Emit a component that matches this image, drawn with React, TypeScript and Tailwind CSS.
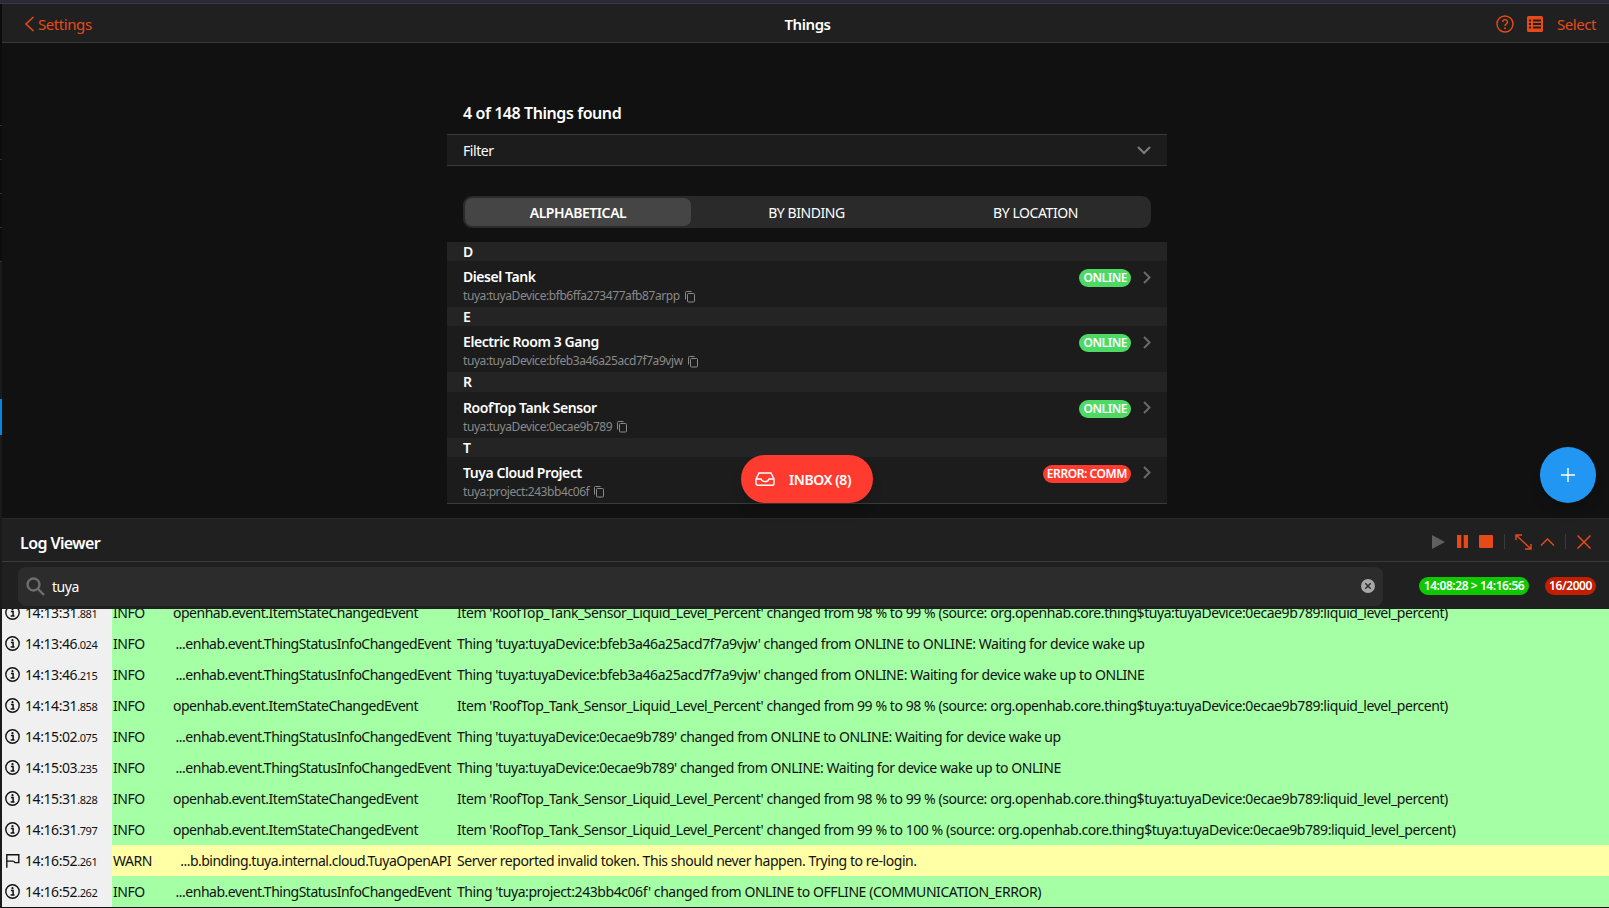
import React from "react";

const OR = "#e64a19";

function Copy() {
  return (
    <svg width="12" height="13" viewBox="0 0 12 13" fill="none" stroke="#8a8a8a" strokeWidth="1" className="ml-[4px] shrink-0">
      <rect x="3.5" y="3.5" width="7" height="8.5" rx="1" />
      <path d="M1.5 9.5V2.5a1 1 0 0 1 1-1h5" />
    </svg>
  );
}

function Info() {
  return (
    <svg width="15" height="15" viewBox="0 0 15 15" fill="none" className="shrink-0">
      <circle cx="7.5" cy="7.5" r="6.7" stroke="#111" strokeWidth="1.4" />
      <circle cx="7.5" cy="4.2" r="1.1" fill="#111" />
      <path d="M5.900 6.600h2.200v4.200M5.600 11h3.900" stroke="#111" strokeWidth="1.5" />
    </svg>
  );
}

function Flag() {
  return (
    <svg width="15" height="15" viewBox="0 0 15 15" fill="none" stroke="#111" strokeWidth="1.4" className="shrink-0">
      <path d="M1.800 14.800V1.800h12v7.800H10c-.6-1-1.200-1.500-2.200-1.500H1.800" />
    </svg>
  );
}

function Chevron() {
  return (
    <svg width="8" height="13" viewBox="0 0 8 13" fill="none" stroke="#6a6a6a" strokeWidth="2">
      <path d="M1 1l5.500 5.500L1 12" />
    </svg>
  );
}

const groups = [
  { l: "D", t: "Diesel Tank", u: "tuya:tuyaDevice:bfb6ffa273477afb87arpp", s: "ONLINE" },
  { l: "E", t: "Electric Room 3 Gang", u: "tuya:tuyaDevice:bfeb3a46a25acd7f7a9vjw", s: "ONLINE" },
  { l: "R", t: "RoofTop Tank Sensor", u: "tuya:tuyaDevice:0ecae9b789", s: "ONLINE" },
  { l: "T", t: "Tuya Cloud Project", u: "tuya:project:243bb4c06f", s: "ERROR: COMM" },
];

const I = "openhab.event.ItemStateChangedEvent";
const T = "...enhab.event.ThingStatusInfoChangedEvent";
const logs: [string, string, string, string, string][] = [
  ["14:13:31", "881", "INFO", I, "Item 'RoofTop_Tank_Sensor_Liquid_Level_Percent' changed from 98 % to 99 % (source: org.openhab.core.thing$tuya:tuyaDevice:0ecae9b789:liquid_level_percent)"],
  ["14:13:46", "024", "INFO", T, "Thing 'tuya:tuyaDevice:bfeb3a46a25acd7f7a9vjw' changed from ONLINE to ONLINE: Waiting for device wake up"],
  ["14:13:46", "215", "INFO", T, "Thing 'tuya:tuyaDevice:bfeb3a46a25acd7f7a9vjw' changed from ONLINE: Waiting for device wake up to ONLINE"],
  ["14:14:31", "858", "INFO", I, "Item 'RoofTop_Tank_Sensor_Liquid_Level_Percent' changed from 99 % to 98 % (source: org.openhab.core.thing$tuya:tuyaDevice:0ecae9b789:liquid_level_percent)"],
  ["14:15:02", "075", "INFO", T, "Thing 'tuya:tuyaDevice:0ecae9b789' changed from ONLINE to ONLINE: Waiting for device wake up"],
  ["14:15:03", "235", "INFO", T, "Thing 'tuya:tuyaDevice:0ecae9b789' changed from ONLINE: Waiting for device wake up to ONLINE"],
  ["14:15:31", "828", "INFO", I, "Item 'RoofTop_Tank_Sensor_Liquid_Level_Percent' changed from 98 % to 99 % (source: org.openhab.core.thing$tuya:tuyaDevice:0ecae9b789:liquid_level_percent)"],
  ["14:16:31", "797", "INFO", I, "Item 'RoofTop_Tank_Sensor_Liquid_Level_Percent' changed from 99 % to 100 % (source: org.openhab.core.thing$tuya:tuyaDevice:0ecae9b789:liquid_level_percent)"],
  ["14:16:52", "261", "WARN", "...b.binding.tuya.internal.cloud.TuyaOpenAPI", "Server reported invalid token. This should never happen. Trying to re-login."],
  ["14:16:52", "262", "INFO", T, "Thing 'tuya:project:243bb4c06f' changed from ONLINE to OFFLINE (COMMUNICATION_ERROR)"],
];

export default function App() {
  return (
    <div className="flex flex-col h-[908px] w-[1609px] overflow-hidden bg-[#111111] text-white font-['Noto_Sans','Open_Sans',sans-serif] text-[14px] tracking-[-0.43px]">
      <div className="h-[4px] bg-[#2a2a3a] border-b border-[#3a3a44] shrink-0" />
      <div className="flex flex-1 min-h-0">
        {/* gutter */}
        <div className="w-[2px] shrink-0 bg-[#0c0c0c] flex flex-col">
          <div className="h-[122px] border-b border-[#333]" />
          <div className="h-[34px] border-b border-[#333]" />
          <div className="h-[34px] border-b border-[#333]" />
          <div className="h-[34px] border-b border-[#333]" />
          <div className="h-[34px] border-b border-[#333]" />
          <div className="h-[137px] bg-[#1a1a1a]" />
          <div className="h-[36px] bg-[#0a84e0]" />
          <div className="flex-1 bg-[#1a1a1a]" />
        </div>
        <div className="flex-1 min-w-0 flex flex-col">
          {/* nav */}
          <div className="h-[39px] shrink-0 bg-[#202020] border-b border-[#3a3a3a] flex items-center pt-[2px]">
            <div className="flex-1 flex items-center pl-[22px] text-[#e64a19] text-[15px]">
              <svg width="11" height="16" viewBox="0 0 11 16" fill="none" stroke={OR} strokeWidth="1.6" className="mr-[3px]">
                <path d="M9.5 1 2 8l7.5 7" />
              </svg>
              Settings
            </div>
            <div className="font-semibold text-[15px] mr-[5px]">Things</div>
            <div className="flex-1 flex items-center justify-end pr-[13px] text-[#e64a19] text-[15px]">
              <svg width="18" height="18" viewBox="0 0 18 18" fill="none" className="mr-[13px]">
                <circle cx="9" cy="9" r="8" stroke={OR} strokeWidth="1.4" />
                <path d="M6.6 7a2.4 2.4 0 1 1 3.6 2.1c-.8.5-1.2.9-1.2 1.8" stroke={OR} strokeWidth="1.5" />
                <circle cx="9" cy="13.2" r="1" fill={OR} />
              </svg>
              <svg width="16" height="16" viewBox="0 0 16 16" className="mr-[14px]">
                <path fill={OR} fillRule="evenodd" d="M1.5 0h13A1.5 1.5 0 0 1 16 1.5v13a1.5 1.5 0 0 1-1.5 1.5h-13A1.5 1.5 0 0 1 0 14.5v-13A1.5 1.5 0 0 1 1.5 0ZM2 3.5v2h2v-2Zm4 0v2h8v-2Zm-4 3.5v2h2V7Zm4 0v2h8V7Zm-4 3.5v2h2v-2Zm4 0v2h8v-2Z" />
              </svg>
              Select
            </div>
          </div>

          {/* main */}
          <div className="flex-1 min-h-0 relative">
            <div className="w-[720px] ml-[445px] pt-[58px]">
              <div className="pl-[16px] h-[33px] text-[16px] font-semibold leading-[24px]">4 of 148 Things found</div>
              <div className="h-[32px] bg-[#1c1c1c] border-y border-[#3a3a3a] pl-[16px] pr-[16px] flex items-center justify-between text-[14px]">
                Filter
                <svg width="14" height="9" viewBox="0 0 14 9" fill="none" stroke="#7c7c7c" strokeWidth="2.200">
                  <path d="M1 1l6 6 6-6" />
                </svg>
              </div>
              <div className="mx-[16px] mt-[30px] h-[32px] rounded-[9px] bg-[#2a2a2a] flex items-center p-[2px] text-[14px]">
                <div className="w-[226px] h-full rounded-[7px] bg-[#454545] flex items-center justify-center font-semibold">ALPHABETICAL</div>
                <div className="w-[231px] h-full flex items-center justify-center">BY BINDING</div>
                <div className="flex-1 h-full flex items-center justify-center">BY LOCATION</div>
              </div>
              <div className="mt-[14px] border-b border-[#3a3a3a]">
                {groups.map((g) => (
                  <div key={g.l}>
                    <div className="h-[19.2px] bg-[#242424] pl-[16px] flex items-center font-semibold text-[14px]">{g.l}</div>
                    <div className="h-[46px] bg-[#1c1c1c] pl-[16px] pr-[16px] flex justify-between">
                      <div className="pt-[6px]">
                        <div className="font-semibold text-[14px] leading-[20px]">{g.t}</div>
                        <div className="flex items-center text-[12px] leading-[16px] text-[#8a8a8a] pt-[1px]">
                          {g.u}
                          <Copy />
                        </div>
                      </div>
                      <div className="flex items-start pt-[8px]">
                        <span className={`h-[18px] rounded-full px-[4px] flex items-center text-[12px] font-semibold ${g.s === "ONLINE" ? "bg-[#4cd964]" : "bg-[#ff3b30]"}`}>{g.s}</span>
                        <span className="ml-[12px] h-[16px] flex items-center"><Chevron /></span>
                      </div>
                    </div>
                  </div>
                ))}
              </div>
            </div>

            {/* Inbox pill */}
            <div className="absolute left-[739px] top-[412px] w-[132px] h-[48px] rounded-full bg-[#ff3b30] flex items-center pl-[14px] font-semibold text-[14px] shadow-lg">
              <svg width="20" height="14" viewBox="0 0 20 14" fill="none" stroke="#fff" strokeWidth="1.4" className="mr-[14px]">
                <path d="M1 7 4 1h12l3 6v4.500a1.800 1.800 0 0 1-1.800 1.800H2.800A1.800 1.800 0 0 1 1 11.500ZM1 7h5c.5 1.800 2 2.600 4 2.600S13.500 8.800 14 7h5" />
              </svg>
              INBOX (8)
            </div>

            {/* FAB */}
            <div className="absolute left-[1538px] top-[404px] w-[56px] h-[56px] rounded-full bg-[#2196f3] flex items-center justify-center shadow-lg">
              <svg width="14" height="14" viewBox="0 0 14 14" stroke="#fff" strokeWidth="1.4">
                <path d="M7 0v14M0 7h14" />
              </svg>
            </div>
          </div>

          {/* Log viewer */}
          <div className="h-[390px] shrink-0 flex flex-col bg-[#202020] border-t border-[#2a2a2a]">
            <div className="h-[43px] shrink-0 border-b border-[#3a3a3a] flex items-center pl-[18px] pr-[18px] pt-[3px]">
              <div className="flex-1 font-semibold text-[16px] pt-[2px] tracking-[-0.6px]">Log Viewer</div>
              <svg width="13" height="14" viewBox="0 0 13 14" className="mr-[12px]"><path d="M0 0l13 7-13 7Z" fill="#5f5f5f" /></svg>
              <svg width="11" height="13" viewBox="0 0 11 13" className="mr-[11px]"><path d="M0 0h4.300v13H0ZM6.700 0H11v13H6.700Z" fill={OR} /></svg>
              <svg width="14" height="13" viewBox="0 0 14 13" className="mr-[11px]"><rect width="14" height="13" rx="1" fill={OR} /></svg>
              <div className="w-px h-[15px] bg-[#3a3a3a] mr-[10px]" />
              <svg width="17" height="16" viewBox="0 0 17 16" fill="none" stroke={OR} strokeWidth="1.4" className="mr-[8px]">
                <path d="M1 1l15 14M1 6V1h6M16 10v5h-6" />
              </svg>
              <svg width="15" height="10" viewBox="0 0 15 10" fill="none" stroke={OR} strokeWidth="1.4" className="mr-[10px]">
                <path d="M1 8.500l6.500-6.500L14 8.500" />
              </svg>
              <div className="w-px h-[15px] bg-[#3a3a3a] mr-[11px]" />
              <svg width="14" height="14" viewBox="0 0 14 14" fill="none" stroke={OR} strokeWidth="1.5">
                <path d="M.5.5l13 13M13.500.5l-13 13" />
              </svg>
            </div>
            <div className="h-[47px] shrink-0 flex items-center pl-[16px] pr-[13px] pt-[1px]">
              <div className="w-[1365px] h-[39px] rounded-[8px] bg-[#2c2c2c] flex items-center pl-[8px] pr-[8px]">
                <svg width="19" height="19" viewBox="0 0 19 19" fill="none" stroke="#6e6e6e" strokeWidth="2.400" className="mr-[7px]">
                  <circle cx="7.500" cy="7.500" r="6" />
                  <path d="M12 12l6 6" />
                </svg>
                <span className="flex-1 text-[14px]">tuya</span>
                <svg width="14" height="14" viewBox="0 0 14 14">
                  <circle cx="7" cy="7" r="7" fill="#a8a8a8" />
                  <path d="M4.300 4.300l5.400 5.400M9.700 4.300 4.300 9.700" stroke="#2c2c2c" strokeWidth="1.400" />
                </svg>
              </div>
              <div className="ml-[36px] h-[18px] w-[110px] rounded-full bg-[#11c700] flex items-center justify-center text-[12px] font-semibold whitespace-nowrap">14:08:28 &gt; 14:16:56</div>
              <div className="ml-[16px] h-[18px] w-[51px] rounded-full bg-[#c41e00] flex items-center justify-center text-[12px] font-semibold">16/2000</div>
            </div>
            <div className="flex-1 min-h-0 overflow-hidden flex flex-col justify-end pb-[1px] bg-[#111111]">
              {logs.map((r, i) => (
                <div key={i} className={`h-[31px] shrink-0 flex items-center text-[14px] text-[#111] whitespace-nowrap ${r[2] === "WARN" ? "bg-[#ffffa5]" : "bg-[#a5ffa5]"}`}>
                  <div className="w-[110px] h-full bg-[#f0f0f0] flex items-center pl-[3px] shrink-0">
                    {r[2] === "WARN" ? <Flag /> : <Info />}
                    <span className="ml-[5px]">{r[0]}<span className="text-[11px]">.{r[1]}</span></span>
                  </div>
                  <div className="w-[61px] pl-[1px] shrink-0">{r[2]}</div>
                  <div className={`w-[278px] mr-[6px] shrink-0 tracking-[-0.5px] ${r[3].startsWith("...") ? "text-right" : ""}`}>{r[3]}</div>
                  <div>{r[4]}</div>
                </div>
              ))}
            </div>
          </div>
        </div>
      </div>
    </div>
  );
}
